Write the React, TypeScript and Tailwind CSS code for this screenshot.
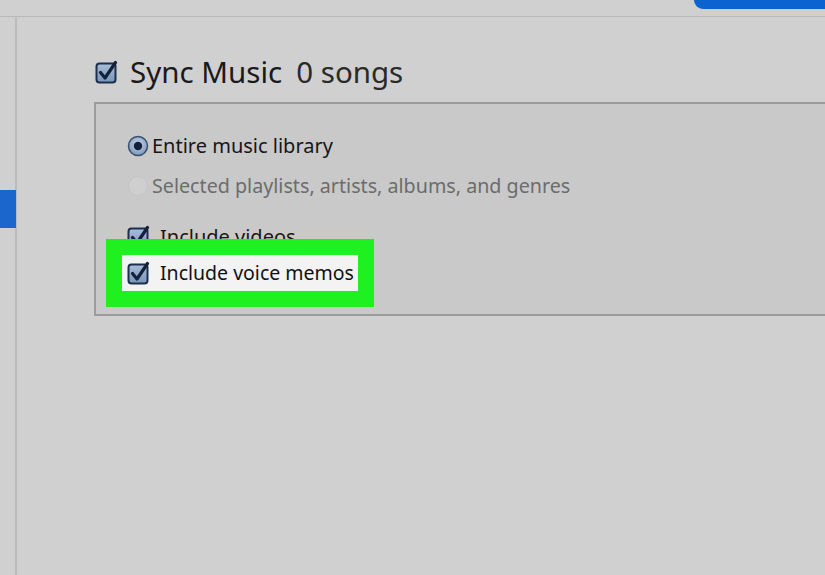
import React from 'react';

const font = { fontFamily: '"Noto Sans", "Open Sans", sans-serif' };

function CheckBox() {
  return (
    <svg width="24" height="24" viewBox="0 0 24 24" className="shrink-0">
      <defs>
        <linearGradient id="cbfill" x1="0" y1="0" x2="0" y2="1">
          <stop offset="0" stopColor="#a9bdd8" />
          <stop offset="1" stopColor="#7895bb" />
        </linearGradient>
      </defs>
      <rect x="1.5" y="3.5" width="19" height="19" rx="3" fill="url(#cbfill)" stroke="#1d2f4c" strokeWidth="2" />
      <path d="M5.5 12.5 L10 18 L20.5 2.5" fill="none" stroke="#13213a" strokeWidth="3.2" strokeLinecap="round" strokeLinejoin="round" />
    </svg>
  );
}

function Radio({ checked }: { checked: boolean }) {
  if (!checked) {
    return (
      <svg width="22" height="22" viewBox="0 0 22 22" className="shrink-0">
        <circle cx="11" cy="11" r="9.5" fill="#cfcfcf" stroke="#c4c4c4" strokeWidth="1" />
      </svg>
    );
  }
  return (
    <svg width="22" height="22" viewBox="0 0 22 22" className="shrink-0">
      <defs>
        <radialGradient id="rdfill" cx="0.5" cy="0.4" r="0.6">
          <stop offset="0" stopColor="#c5d4e8" />
          <stop offset="1" stopColor="#7d98bd" />
        </radialGradient>
      </defs>
      <circle cx="11" cy="11" r="9.5" fill="url(#rdfill)" stroke="#3b4f6e" strokeWidth="1.5" />
      <circle cx="11" cy="11" r="4.2" fill="#14213a" />
    </svg>
  );
}

export default function App() {
  return (
    <div className="w-[825px] h-[575px] bg-[#d0d0d0] flex flex-col overflow-hidden" style={font}>
      {/* top bar */}
      <div className="h-[17px] border-b border-[#b9b9b9] flex justify-end shrink-0">
        <div className="w-[131px] h-[9px] bg-[#0b63cf] rounded-bl-[9px]" />
      </div>

      <div className="flex flex-1">
        {/* sidebar */}
        <div className="w-[17px] border-r-2 border-[#bcbcbc] shrink-0">
          <div className="mt-[173px] h-[38px] w-[16px] bg-[#1b66cc]" />
        </div>

        {/* content */}
        <div className="flex-1 pl-[77px] pt-[36px]">
          <div className="flex items-center h-[38px] pl-[1px]">
            <CheckBox />
            <span className="ml-[11px] text-[29.5px] text-[#1a1a1a] leading-none whitespace-nowrap">Sync Music</span>
            <span className="ml-[14px] text-[29.5px] text-[#2a2a2a] leading-none whitespace-nowrap">0 songs</span>
          </div>

          <div className="mt-[11px] h-[214px] border-2 border-r-0 border-[#9c9c9c] bg-[#c9c9c9] pl-[31px] pt-[31px]">
            <div className="flex items-center h-[22px]">
              <Radio checked />
              <span className="ml-[3px] text-[20px] text-[#161616] leading-none whitespace-nowrap">Entire music library</span>
            </div>
            <div className="flex items-center h-[22px] mt-[18px]">
              <Radio checked={false} />
              <span className="ml-[3px] text-[19.7px] text-[#6c6c6c] leading-none whitespace-nowrap">
                Selected playlists, artists, albums, and genres
              </span>
            </div>
            <div className="flex items-center h-[24px] mt-[28px]">
              <CheckBox />
              <span className="ml-[9px] text-[20px] text-[#161616] leading-none whitespace-nowrap">Include videos</span>
            </div>
            <div className="relative -mt-[10px] -ml-[21px] w-[268px] h-[68px] border-[16px] border-[#1ff01f] bg-[#f3f3f3] flex items-center pl-[5px]">
              <CheckBox />
              <span className="ml-[9px] text-[19.5px] text-[#111111] leading-none whitespace-nowrap">Include voice memos</span>
            </div>
          </div>
        </div>
      </div>
    </div>
  );
}
